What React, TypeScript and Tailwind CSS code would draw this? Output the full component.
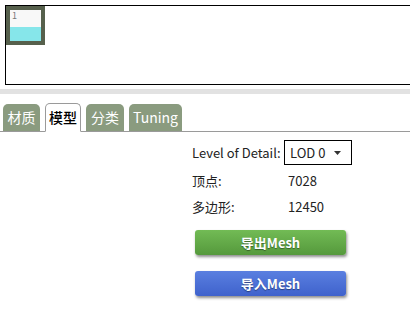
export default function App() {
  const tabs = [
    { t: "材质", w: "w-[37px]" },
    { t: "模型", w: "w-[36px]" },
    { t: "分类", w: "w-[38px]" },
    { t: "Tuning", w: "w-[53px]" },
  ];
  return (
    <div
      className="w-[410px] h-[324px] bg-white overflow-hidden relative text-[13px] text-[#222]"
      style={{ fontFamily: '"Noto Sans CJK SC", "Noto Sans", sans-serif' }}
    >
      {/* preview box */}
      <div className="pt-[5px] pl-[5px]">
        <div className="h-[80px] border border-black border-r-0 bg-white">
          <div className="w-[39px] h-[39px] bg-[#56604c] p-[4px]">
            <div className="w-full h-full flex flex-col">
              <div className="h-[17px] bg-[#f8f8f8] relative">
                <span className="absolute left-[2px] top-[1px] text-[9px] leading-none text-[#777]">1</span>
              </div>
              <div className="flex-1 bg-[#86e6ea]" />
            </div>
          </div>
        </div>
      </div>

      {/* separator band */}
      <div className="mt-[4px] h-[5px] bg-[#e2e2e2]" />

      {/* tabs */}
      <div className="mt-[10px] flex items-end gap-[5px] pl-[3px] border-b border-[#9a9a9a] h-[28px]">
        {tabs.map((x, i) =>
          i === 1 ? (
            <div
              key={x.t}
              className={`${x.w} h-[29px] -mb-px flex items-center justify-center bg-white border border-[#9a9a9a] border-b-white rounded-t-[5px] text-black font-medium text-[14px]`}
            >
              {x.t}
            </div>
          ) : (
            <div
              key={x.t}
              className={`${x.w} h-[27px] flex items-center justify-center bg-[#8a9b7f] rounded-t-[5px] text-white text-[14px]`}
            >
              {x.t}
            </div>
          )
        )}
      </div>

      {/* content */}
      <div className="pl-[192px] pt-[8px]">
        <div className="flex items-center h-[25px]">
          <span className="w-[92px]">Level of Detail:</span>
          <div className="w-[68px] h-[25px] border border-black flex items-center pl-[5px] pr-[10px] justify-between">
            <span>LOD 0</span>
            <svg width="7" height="4" viewBox="0 0 7 4">
              <path d="M0 0 L7 0 L3.5 4 Z" fill="#333" />
            </svg>
          </div>
        </div>
        <div className="flex items-center h-[18px] mt-[7px]">
          <span className="w-[96px]">顶点:</span>
          <span>7028</span>
        </div>
        <div className="flex items-center h-[18px] mt-[8px]">
          <span className="w-[96px]">多边形:</span>
          <span>12450</span>
        </div>
        <div className="pl-[3px] mt-[14px] flex flex-col gap-[16px]">
          <div className="w-[151px] h-[25px] rounded-[3px] bg-gradient-to-b from-[#72bb55] to-[#55993c] shadow-[1px_2px_3px_rgba(0,0,0,0.45)] flex items-center justify-center text-white font-bold text-[13px] [text-shadow:0_1px_1px_rgba(0,0,0,0.4)]">
            导出Mesh
          </div>
          <div className="w-[151px] h-[25px] rounded-[3px] bg-gradient-to-b from-[#5a7fe0] to-[#3f62cc] shadow-[1px_2px_3px_rgba(0,0,0,0.45)] flex items-center justify-center text-white font-bold text-[13px] [text-shadow:0_1px_1px_rgba(0,0,0,0.4)]">
            导入Mesh
          </div>
        </div>
      </div>
    </div>
  );
}
